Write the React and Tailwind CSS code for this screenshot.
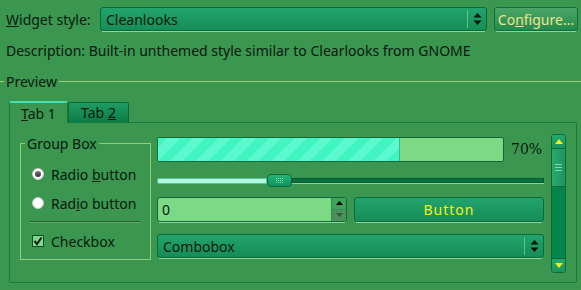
import React from 'react';

const font = { fontFamily: '"Noto Sans", "DejaVu Sans", sans-serif' };

function UpDown() {
  return (
    <svg width="9" height="14" viewBox="0 0 9 14">
      <path d="M4.5 1 L8.5 5.5 L0.5 5.5 Z" fill="#05140b" />
      <path d="M4.5 13 L8.5 8.5 L0.5 8.5 Z" fill="#05140b" />
    </svg>
  );
}

function Combo({ label, className = '' }) {
  return (
    <div className={`flex flex-col ${className}`}>
      <div className="flex items-center h-[24px] rounded-[3px] border border-[#0b6a3b] bg-gradient-to-b from-[#23a46d] to-[#168d57] pl-[5px]">
        <span className="flex-1 text-[14px] text-[#08190e]">{label}</span>
        <div className="w-px h-[18px] bg-[#5cc47c]" />
        <div className="w-[18px] flex justify-center">
          <UpDown />
        </div>
      </div>
      <div className="h-px mx-[2px] bg-[#8fd49a]" />
    </div>
  );
}

function Radio({ checked, children }) {
  return (
    <div className="flex items-center gap-[7px] h-[20px]">
      <div className="w-[12px] h-[12px] rounded-full bg-white border border-[#c8c8c8] flex items-center justify-center">
        {checked && <div className="w-[6px] h-[6px] rounded-full bg-gradient-to-b from-[#7a7a7a] to-[#333]" />}
      </div>
      <span className="text-[14px] text-[#08190e]">{children}</span>
    </div>
  );
}

export default function App() {
  return (
    <div className="w-[581px] h-[290px] bg-[#3b9650] overflow-hidden text-[#08190e]" style={font}>
      {/* style selector row */}
      <div className="flex items-start pt-[7px] pl-[6px] pr-[3px] h-[33px]">
        <div className="w-[94px] h-[25px] flex items-center text-[14px]">
          <span><u>W</u>idget style:</span>
        </div>
        <Combo label="Cleanlooks" className="w-[387px]" />
        <div className="ml-[7px] flex flex-col w-[84px]">
          <div className="h-[24px] flex items-center justify-center rounded-[3px] border border-[#0f6e3d] bg-gradient-to-b from-[#4aa666] to-[#228a4e] text-[14px] text-[#eee68a]">
            <span>Co<u>n</u>figure...</span>
          </div>
          <div className="h-px mx-[2px] bg-[#8fd49a]" />
        </div>
      </div>

      <div className="pl-[6px] mt-[7px] h-[20px] flex items-center text-[14px]">
        Description: Built-in unthemed style similar to Clearlooks from GNOME
      </div>

      {/* preview group title */}
      <div className="flex items-center mt-[11px] h-[20px]">
        <div className="w-[4px] h-px bg-[#9ad07a]" />
        <span className="px-[2px] text-[14px]">Preview</span>
        <div className="flex-1 h-px bg-[#9ad07a]" />
      </div>

      {/* tabs */}
      <div className="ml-[9px] mt-[10px] w-[568px]">
        <div className="flex items-end h-[21px]">
          <div className="w-[59px] h-[22px] relative z-10 -mb-px bg-[#3b9650] border border-b-0 border-[#167a40] border-t-2 border-t-[#45e0b0] rounded-t-[2px] flex items-center justify-center text-[14px]">
            <span><u>T</u>ab 1</span>
          </div>
          <div className="w-[61px] h-[20px] bg-gradient-to-b from-[#1f9c62] to-[#0d7c46] border border-[#0c6a3a] border-b-0 rounded-t-[2px] flex items-center justify-center text-[14px]">
            <span>Tab <u>2</u></span>
          </div>
        </div>
        <div className="h-[161px] border border-[#167a40] rounded-b-[2px] rounded-tr-[2px] flex items-start pl-[10px] pr-[10px]">
          {/* group box */}
          <div className="w-[131px] h-[124px] mt-[13px] relative">
            <div className="absolute inset-x-0 top-[7px] bottom-0 border border-[#8fd07a]" />
            <div className="relative flex flex-col pl-[12px] pr-[11px]">
              <div className="ml-[-7px] self-start bg-[#3b9650] px-[2px] text-[14px] h-[16px] leading-[16px]">Group Box</div>
              <div className="mt-[12px]">
                <Radio checked>Radio <u>b</u>utton</Radio>
              </div>
              <div className="mt-[9px]">
                <Radio>Rad<u>i</u>o button</Radio>
              </div>
              <div className="mt-[8px] ml-[-2px] h-[2px] border-t border-[#2a5a33] border-b border-b-[#5fae6c]" />
              <div className="flex items-center gap-[7px] h-[20px] mt-[8px]">
                <div className="w-[12px] h-[12px] border border-[#0d4d26] bg-[#7cdb86] flex items-center justify-center">
                  <svg width="10" height="10" viewBox="0 0 10 10">
                    <path d="M1.5 5 L4 8 L8.5 1.5" stroke="#05140b" strokeWidth="2" fill="none" />
                  </svg>
                </div>
                <span className="text-[14px]">Checkbox</span>
              </div>
            </div>
          </div>

          {/* right column */}
          <div className="ml-[6px] w-[387px] flex flex-col pt-[14px]">
            <div className="flex items-center h-[25px]">
              <div className="w-[347px] h-[25px] shrink-0 border border-[#0f6a3a] rounded-[2px] bg-[#7cda84] flex overflow-hidden">
                <div
                  className="w-[242px] h-full border-r border-[#2fbf8e]"
                  style={{
                    backgroundImage:
                      'repeating-linear-gradient(-45deg, #40f5c0 0px, #40f5c0 9px, #5bf9cf 9px, #5bf9cf 18px)',
                  }}
                />
              </div>
              <span className="ml-[7px] text-[14px] whitespace-nowrap" style={{ fontFamily: '"DejaVu Serif", serif' }}>70%</span>
            </div>

            {/* slider */}
            <div className="flex items-center h-[13px] mt-[12px]">
              <div className="w-[110px] h-[6px] bg-[#b4f5de] border border-[#4fc7a0] rounded-l-[2px]" />
              <div className="w-[25px] h-[13px] rounded-[4px] border border-[#0c6a3a] bg-gradient-to-b from-[#24b478] to-[#129060] flex items-center justify-center">
                <div className="grid grid-cols-4 gap-[1px]">
                  {Array.from({ length: 12 }).map((_, i) => (
                    <div key={i} className="w-[1px] h-[1px] bg-[#7fe0b0]" />
                  ))}
                </div>
              </div>
              <div className="flex-1 flex flex-col">
                <div className="h-[5px] bg-[#0a7040] border border-[#075a30]" />
                <div className="h-px bg-[#8fd49a]" />
              </div>
            </div>

            {/* spinbox + button */}
            <div className="flex mt-[10px] h-[26px]">
              <div className="w-[190px] flex flex-col">
                <div className="h-[25px] flex border border-[#0e6a3a] rounded-[3px] bg-[#7cda84] overflow-hidden">
                  <span className="flex-1 flex items-center pl-[4px] text-[14px]">0</span>
                  <div className="w-[15px] flex flex-col border-l border-[#2e8f50]">
                    <div className="h-1/2 bg-[#3fa15c] flex items-center justify-center border-b border-[#2e8f50]">
                      <svg width="7" height="4" viewBox="0 0 7 4"><path d="M3.5 0 L7 4 L0 4 Z" fill="#000" /></svg>
                    </div>
                    <div className="h-1/2 bg-[#4d8e5c] flex items-center justify-center">
                      <svg width="7" height="4" viewBox="0 0 7 4"><path d="M0 0 L7 0 L3.5 4 Z" fill="#2d5e3a" /></svg>
                    </div>
                  </div>
                </div>
                <div className="h-px mx-[2px] bg-[#8fd49a]" />
              </div>
              <div className="ml-[7px] flex-1 flex flex-col">
                <div className="h-[25px] flex items-center justify-center rounded-[3px] border border-[#0b6a3b] bg-gradient-to-b from-[#23a46d] to-[#168d57] text-[14px] text-[#f2ef1a] tracking-[1px]">
                  Button
                </div>
                <div className="h-px mx-[2px] bg-[#8fd49a]" />
              </div>
            </div>

            <Combo label="Combobox" className="mt-[11px]" />
          </div>

          {/* scrollbar */}
          <div className="ml-[7px] mt-[11px] w-[15px] h-[139px] shrink-0 border border-[#0c6a3a] rounded-[3px] flex flex-col overflow-hidden">
            <div className="h-[14px] bg-gradient-to-b from-[#24a86c] to-[#1a955c] border-b border-[#0c6a3a] flex items-center justify-center">
              <svg width="8" height="5" viewBox="0 0 8 5"><path d="M4 0 L8 5 L0 5 Z" fill="#f2ef1a" /></svg>
            </div>
            <div className="h-[38px] bg-gradient-to-r from-[#2aa86e] to-[#1c9560] border-b border-[#0c6a3a] flex flex-col items-center justify-center gap-[2px]">
              <div className="w-[7px] h-px bg-[#7fd9a4]" />
              <div className="w-[7px] h-px bg-[#7fd9a4]" />
              <div className="w-[7px] h-px bg-[#7fd9a4]" />
            </div>
            <div className="flex-1 bg-[#06854a]" />
            <div className="h-[14px] bg-gradient-to-b from-[#24a86c] to-[#1a955c] border-t border-[#0c6a3a] flex items-center justify-center">
              <svg width="8" height="5" viewBox="0 0 8 5"><path d="M0 0 L8 0 L4 5 Z" fill="#f2ef1a" /></svg>
            </div>
          </div>
        </div>
      </div>
    </div>
  );
}
